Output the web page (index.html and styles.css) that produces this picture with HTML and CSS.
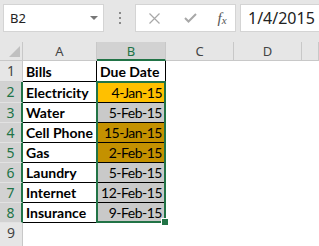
FILE: index.html
```html
<!DOCTYPE html>
<html lang="en">
<head>
    <meta charset="UTF-8">
    <title>Bills</title>
    <link rel="stylesheet" href="styles.css">
</head>
<body>
    <div class="formula-bar">
        <div class="name-box">
            <span>B2</span>
            <span class="caret"></span>
        </div>
        <div class="grip"><i></i><i></i><i></i></div>
        <div class="fx-buttons">
            <svg class="btn" width="11" height="11" viewBox="0 0 11 11">
                <path d="M0.5 0.5 L10.5 10.5 M10.5 0.5 L0.5 10.5" stroke="#a8a8a8" stroke-width="1.2" fill="none"/>
            </svg>
            <svg class="btn" width="13" height="10" viewBox="0 0 13 10">
                <path d="M1 5 L4.5 8.5 L12 1" stroke="#a8a8a8" stroke-width="2" fill="none"/>
            </svg>
            <span class="fx">f<sub>x</sub></span>
        </div>
        <div class="formula-input">1/4/2015</div>
    </div>

    <div class="sheet">
        <div class="corner"><span class="corner-mark"></span></div>
        <div class="col-head">A</div>
        <div class="col-head active">B</div>
        <div class="col-head">C</div>
        <div class="col-head">D</div>
        <div class="col-head"></div>

        <div class="row-head">1</div>
        <div class="cell label">Bills</div>
        <div class="cell label">Due Date</div>
        <div></div><div></div><div></div>

        <div class="row-head active">2</div>
        <div class="cell label">Electricity</div>
        <div class="cell date gold">4-Jan-15</div>
        <div></div><div></div><div></div>

        <div class="row-head active">3</div>
        <div class="cell label">Water</div>
        <div class="cell date grey">5-Feb-15</div>
        <div></div><div></div><div></div>

        <div class="row-head active">4</div>
        <div class="cell label">Cell Phone</div>
        <div class="cell date dark-gold">15-Jan-15</div>
        <div></div><div></div><div></div>

        <div class="row-head active">5</div>
        <div class="cell label">Gas</div>
        <div class="cell date dark-gold">2-Feb-15</div>
        <div></div><div></div><div></div>

        <div class="row-head active">6</div>
        <div class="cell label">Laundry</div>
        <div class="cell date grey">5-Feb-15</div>
        <div></div><div></div><div></div>

        <div class="row-head active">7</div>
        <div class="cell label">Internet</div>
        <div class="cell date grey">12-Feb-15</div>
        <div></div><div></div><div></div>

        <div class="row-head active">8</div>
        <div class="cell label">Insurance</div>
        <div class="cell date grey">9-Feb-15</div>
        <div></div><div></div><div></div>

        <div class="row-head">9</div>
        <div></div><div></div><div></div><div></div><div></div>

        <div class="selection"></div>
    </div>
</body>
</html>
```

FILE: styles.css
```css
body {
    margin: 0;
    width: 319px;
    height: 246px;
    overflow: hidden;
    background: #e6e6e6;
    font-family: "Noto Sans", sans-serif;
    color: #222;
}

/* formula bar */
.formula-bar {
    display: flex;
    height: 28px;
    padding: 4px 0 10px 3px;
}
.formula-bar > div {
    flex-shrink: 0;
}
.name-box {
    width: 101px;
    box-sizing: border-box;
    background: #fff;
    border: 1px solid #d4d4d4;
    display: flex;
    align-items: center;
    justify-content: space-between;
    padding: 0 5px 0 6px;
    font-size: 13px;
}
.caret {
    width: 0;
    height: 0;
    border-left: 4px solid transparent;
    border-right: 4px solid transparent;
    border-top: 4px solid #777;
}
.grip {
    width: 31px;
    display: flex;
    flex-direction: column;
    align-items: center;
    justify-content: center;
    gap: 3px;
}
.grip i {
    width: 2px;
    height: 2px;
    background: #8a8a8a;
}
.fx-buttons {
    width: 101px;
    box-sizing: border-box;
    background: #fff;
    border: 1px solid #d4d4d4;
    display: grid;
    grid-template-columns: 36px 37px 1fr;
    align-items: center;
    justify-items: center;
}
.fx {
    font-family: "Liberation Serif", serif;
    font-style: italic;
    font-size: 15px;
    color: #555;
    line-height: 1;
}
.fx sub {
    font-size: 11px;
    vertical-align: -1px;
}
.formula-bar > .formula-input {
    flex: 1 1 0;
    min-width: 0;
    margin-left: 4px;
    background: #fff;
    border: 1px solid #d4d4d4;
    border-right: none;
    padding-left: 7px;
    font-size: 16px;
    line-height: 26px;
    white-space: nowrap;
}

/* sheet grid */
.sheet {
    display: grid;
    grid-template-columns: 23px 74px 69px 68px 68px 1fr;
    grid-template-rows: 19px 21px 21px 20px 20px 20px 20px 20px 20px 24px;
    background: #fff;
    position: relative;
}
.sheet > div {
    box-sizing: border-box;
}
.corner, .col-head {
    background: #e6e6e6;
    border-right: 1px solid #c8c8c8;
    border-bottom: 1px solid #c8c8c8;
}
.corner {
    display: flex;
    align-items: flex-end;
    justify-content: flex-end;
    padding: 0 2px 3px 0;
}
.corner-mark {
    width: 0;
    height: 0;
    border-left: 11px solid transparent;
    border-bottom: 11px solid #c0c0c0;
}
.col-head {
    font-size: 13px;
    color: #444;
    text-align: center;
    line-height: 18px;
}
.col-head.active {
    background: #d2d2d2;
    color: #217346;
    border-bottom: 2px solid #217346;
}
.row-head {
    background: #e6e6e6;
    border-right: 1px solid #c8c8c8;
    border-bottom: 1px solid #d0d0d0;
    font-size: 14px;
    color: #444;
    text-align: center;
    line-height: 20px;
}
.row-head.active {
    background: #d2d2d2;
    color: #217346;
    border-right: 2px solid #217346;
    border-bottom-color: #e2e2e2;
}
.cell {
    border-right: 1px solid #000;
    border-bottom: 1px solid #000;
    font-family: Lato, sans-serif;
    font-size: 14px;
    color: #000;
    line-height: 17px;
    padding: 0 3px 1px 3px;
    display: flex;
    align-items: flex-end;
}
.label {
    font-weight: bold;
}
.date {
    justify-content: flex-end;
    letter-spacing: -0.5px;
}
.gold {
    background: #ffc000;
}
.dark-gold {
    background: #c49100;
}
.grey {
    background: #c9c9c9;
}

/* selected range B2:B8, drawn over its grid area */
.selection {
    grid-column: 3 / 4;
    grid-row: 3 / 10;
    position: absolute;
    top: -1px;
    left: -1px;
    right: 0;
    bottom: 0;
    border: 2px solid #217346;
}
.selection::after {
    content: "";
    position: absolute;
    right: -5px;
    bottom: -5px;
    width: 6px;
    height: 6px;
    background: #217346;
    border: 1px solid #fff;
}
```
